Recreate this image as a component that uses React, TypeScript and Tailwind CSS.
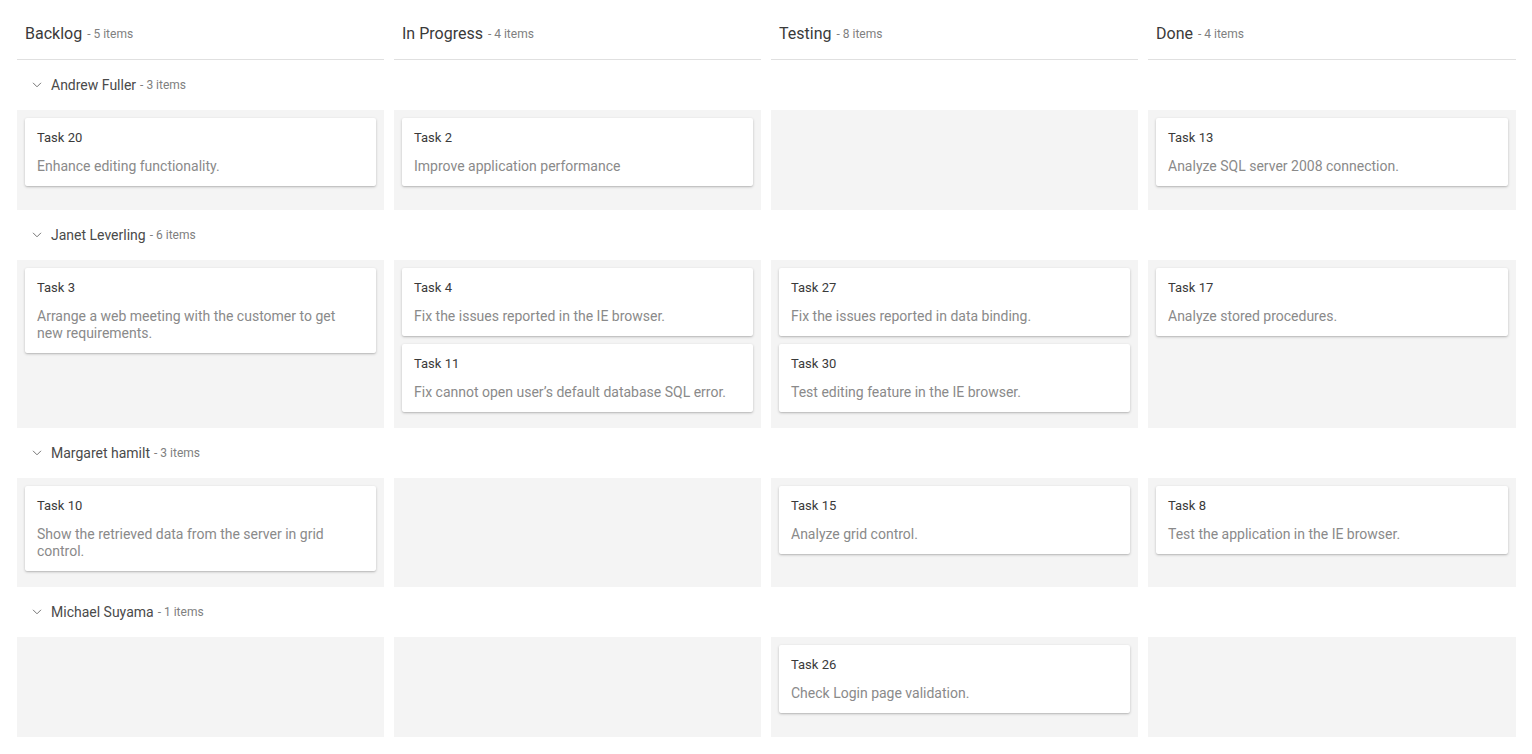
import React from "react";

type Card = { id: string; text: string };
type Lane = { name: string; count: number; cells: Card[][] };

const columns = [
  { title: "Backlog", count: 5 },
  { title: "In Progress", count: 4 },
  { title: "Testing", count: 8 },
  { title: "Done", count: 4 },
];

const lanes: Lane[] = [
  {
    name: "Andrew Fuller",
    count: 3,
    cells: [
      [{ id: "Task 20", text: "Enhance editing functionality." }],
      [{ id: "Task 2", text: "Improve application performance" }],
      [],
      [{ id: "Task 13", text: "Analyze SQL server 2008 connection." }],
    ],
  },
  {
    name: "Janet Leverling",
    count: 6,
    cells: [
      [{ id: "Task 3", text: "Arrange a web meeting with the customer to get new requirements." }],
      [
        { id: "Task 4", text: "Fix the issues reported in the IE browser." },
        { id: "Task 11", text: "Fix cannot open user\u2019s default database SQL error." },
      ],
      [
        { id: "Task 27", text: "Fix the issues reported in data binding." },
        { id: "Task 30", text: "Test editing feature in the IE browser." },
      ],
      [{ id: "Task 17", text: "Analyze stored procedures." }],
    ],
  },
  {
    name: "Margaret hamilt",
    count: 3,
    cells: [
      [{ id: "Task 10", text: "Show the retrieved data from the server in grid control." }],
      [],
      [{ id: "Task 15", text: "Analyze grid control." }],
      [{ id: "Task 8", text: "Test the application in the IE browser." }],
    ],
  },
  {
    name: "Michael Suyama",
    count: 1,
    cells: [[], [], [{ id: "Task 26", text: "Check Login page validation." }], []],
  },
];

function Chevron() {
  return (
    <svg width="10" height="6" viewBox="0 0 10 6" className="mr-[9px]">
      <path d="M1 0.8 L5 4.8 L9 0.8" fill="none" stroke="#757575" strokeWidth="1" />
    </svg>
  );
}

function KCard({ card }: { card: Card }) {
  return (
    <div className="bg-white rounded-[2px] px-3 pt-[12px] pb-[11px] shadow-[0_1px_3px_0_rgba(0,0,0,0.2),0_1px_1px_0_rgba(0,0,0,0.08)]">
      <div className="text-[13px] leading-[16px] text-[#3a3a3a]">{card.id}</div>
      <div className="mt-[12px] text-[14px] leading-[17px] text-[#8a8a8a]">{card.text}</div>
    </div>
  );
}

export default function App() {
  return (
    <div
      className="w-[1532px] h-[754px] bg-white pl-[17px] pr-[16px] overflow-hidden"
      style={{ fontFamily: "Roboto, 'Liberation Sans', sans-serif" }}
    >
      <div className="grid grid-cols-[367px_367px_367px_368px] gap-x-[10px]">
        {columns.map((c) => (
          <div key={c.title} className="h-[60px] border-b border-[#e0e0e0] flex items-center pl-2 pt-[8px]">
            <span className="text-[16px] text-[#3a3a3a]">{c.title}</span>
            <span className="text-[12px] text-[#808080] ml-[5px] mt-[1px]">- {c.count} items</span>
          </div>
        ))}
      </div>
      {lanes.map((lane) => (
        <div key={lane.name}>
          <div className="h-[50px] flex items-center pl-[15px]">
            <Chevron />
            <span className="text-[14px] text-[#4a4a4a]">{lane.name}</span>
            <span className="text-[12px] text-[#808080] ml-[4px]">- {lane.count} items</span>
          </div>
          <div className="grid grid-cols-[367px_367px_367px_368px] gap-x-[10px]">
            {lane.cells.map((cards, i) => (
              <div key={i} className="bg-[#f4f4f4] min-h-[100px] pt-2 pb-4 px-2 flex flex-col gap-2">
                {cards.map((card) => (
                  <KCard key={card.id} card={card} />
                ))}
              </div>
            ))}
          </div>
        </div>
      ))}
    </div>
  );
}
